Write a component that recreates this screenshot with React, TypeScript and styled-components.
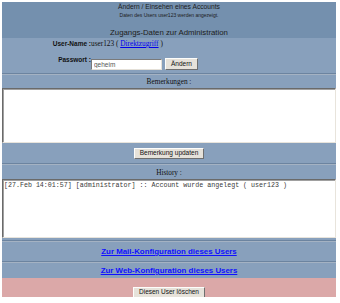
import styled, { createGlobalStyle } from "styled-components";

const GlobalStyle = createGlobalStyle`
  html, body {
    margin: 0;
    background: #ffffff;
  }
  body {
    padding: 2px 0 0 2px;
    font-family: "Liberation Sans", Arial, sans-serif;
  }
`;

const DARK = "#7490ae";
const LIGHT = "#88a0bc";
const PINK = "#dba8a8";

const Frame = styled.div`
  width: 334px;
  display: flex;
  flex-direction: column;
  background: ${LIGHT};
`;

const Header = styled.div`
  height: 36px;
  background: ${DARK};
  display: flex;
  flex-direction: column;
  align-items: center;
  color: #1c1c1c;
`;

const Title = styled.div`
  font-size: 6.7px;
  line-height: 10px;
`;

const SubTitle = styled.div`
  font-size: 5px;
  line-height: 7px;
`;

const SectionTitle = styled.div`
  margin-top: 9px;
  font-size: 7.8px;
  line-height: 10px;
  color: #202020;
`;

const AccountGrid = styled.div`
  height: 35px;
  box-sizing: border-box;
  padding-top: 1px;
  display: grid;
  grid-template-columns: 89px 1fr;
  grid-template-rows: 10px 12px;
  row-gap: 9px;
  align-items: start;
`;

const Label = styled.div<{ $shift?: number }>`
  text-align: right;
  font-weight: bold;
  font-size: 6.5px;
  line-height: 10px;
  color: #111;
  margin-top: ${(p) => p.$shift ?? 0}px;
`;

const Value = styled.div`
  font-family: "Liberation Serif", "Times New Roman", serif;
  font-size: 7.3px;
  line-height: 10px;
  color: #111;
  a {
    color: #0000ee;
  }
`;

const Inline = styled.div`
  display: flex;
  align-items: flex-start;
  gap: 3px;
`;

const TextInput = styled.input`
  width: 71px;
  height: 11px;
  margin: 1px 0 0;
  box-sizing: border-box;
  padding: 0 2px;
  font-family: "Liberation Sans", Arial, sans-serif;
  font-size: 6.5px;
  color: #555;
  background: #fff;
  border: 1px solid;
  border-color: #7a7a7a #e4e0d8 #e4e0d8 #7a7a7a;
  outline: none;
`;

const Button = styled.button<{ $h?: number }>`
  height: ${(p) => p.$h ?? 11}px;
  box-sizing: border-box;
  padding: 0 5px;
  font-family: "Liberation Sans", Arial, sans-serif;
  font-size: 6.5px;
  line-height: 1;
  color: #111;
  background: #e6e2da;
  border: 1px solid;
  border-color: #fdfdfb #6f6f6f #6f6f6f #fdfdfb;
  cursor: pointer;
`;

const Separator = styled.div`
  height: 2px;
  box-sizing: border-box;
  border-top: 1px solid #6c84a0;
  border-bottom: 1px solid #a4b2c3;
`;

const CaptionRow = styled.div<{ $h: number }>`
  height: ${(p) => p.$h}px;
  display: flex;
  align-items: center;
  justify-content: center;
  font-family: "Liberation Serif", "Times New Roman", serif;
  font-size: 7.3px;
  color: #111;
`;

const Box = styled.textarea<{ $h: number }>`
  display: block;
  width: 334px;
  height: ${(p) => p.$h}px;
  margin: 0;
  box-sizing: border-box;
  padding: 1px 1px;
  resize: none;
  overflow: hidden;
  background: #fff;
  border: 1px solid;
  border-color: #6a6a6a #e8e4dc #e8e4dc #6a6a6a;
  box-shadow: inset 1px 1px 0 #a0a0a0;
  font-family: "Liberation Mono", "Courier New", monospace;
  font-size: 6.65px;
  line-height: 8px;
  color: #3a3a3a;
  outline: none;
`;

const ButtonRow = styled.div<{ $h: number; $bg?: string; $pt: number }>`
  height: ${(p) => p.$h}px;
  box-sizing: border-box;
  padding-top: ${(p) => p.$pt}px;
  display: flex;
  justify-content: center;
  align-items: flex-start;
  background: ${(p) => p.$bg ?? "transparent"};
`;

const Gap = styled.div<{ $h: number }>`
  height: ${(p) => p.$h}px;
`;

const LinkRow = styled.div<{ $h: number }>`
  height: ${(p) => p.$h}px;
  display: flex;
  align-items: center;
  justify-content: center;
`;

const NavLink = styled.a`
  font-weight: bold;
  font-size: 7.9px;
  color: #1010ff;
  text-decoration: underline;
`;

export default function App() {
  return (
    <>
      <GlobalStyle />
      <Frame>
        <Header>
          <Title>Ändern / Einsehen eines Accounts</Title>
          <SubTitle>Daten des Users user123 werden angezeigt.</SubTitle>
          <SectionTitle>Zugangs-Daten zur Administration</SectionTitle>
        </Header>
        <AccountGrid>
          <Label>User-Name :</Label>
          <Value>
            user123 ( <a href="#">Direktzugriff</a> )
          </Value>
          <Label $shift={-3}>Passwort :</Label>
          <Inline>
            <TextInput type="text" defaultValue="geheim" />
            <Button $h={12}>Ändern</Button>
          </Inline>
        </AccountGrid>
        <Separator />
        <CaptionRow $h={13}>Bemerkungen :</CaptionRow>
        <Box $h={55} defaultValue="" />
        <ButtonRow $h={20} $pt={5}>
          <Button>Bemerkung updaten</Button>
        </ButtonRow>
        <Separator />
        <CaptionRow $h={14}>History :</CaptionRow>
        <Box
          $h={59}
          readOnly
          defaultValue="[27.Feb 14:01:57] [administrator] :: Account wurde angelegt ( user123 )"
        />
        <Gap $h={2} />
        <Separator />
        <LinkRow $h={19}>
          <NavLink href="#">Zur Mail-Konfiguration dieses Users</NavLink>
        </LinkRow>
        <Separator />
        <LinkRow $h={15}>
          <NavLink href="#">Zur Web-Konfiguration dieses Users</NavLink>
        </LinkRow>
        <ButtonRow $h={19} $pt={9} $bg={PINK}>
          <Button>Diesen User löschen</Button>
        </ButtonRow>
      </Frame>
    </>
  );
}
